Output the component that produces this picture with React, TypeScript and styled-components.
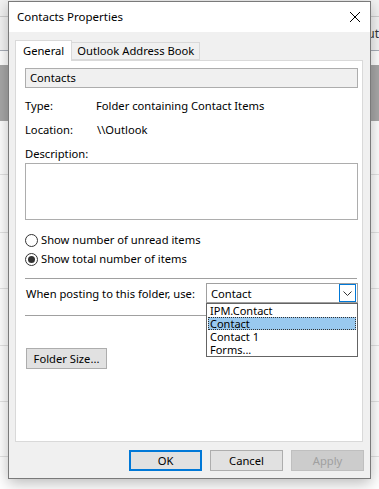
import styled, { createGlobalStyle } from 'styled-components';

const Global = createGlobalStyle`
    html, body {
        margin: 0;
        padding: 0;
        width: 379px;
        height: 489px;
        overflow: hidden;
        background: #ffffff;
    }
    * {
        box-sizing: border-box;
    }
`;

const Screen = styled.div`
    position: relative;
    width: 379px;
    height: 489px;
    overflow: hidden;
    font-family: "Noto Sans", "Open Sans", sans-serif;
    font-size: 11.2px;
    color: #000;
`;

const Backdrop = styled.div`
    display: flex;
    flex-direction: column;
    width: 100%;
    height: 100%;
    background: #ffffff;
`;

const BgRow = styled.div<{ $h: number; $bg?: string; $line?: string }>`
    height: ${(p) => p.$h}px;
    flex-shrink: 0;
    background: ${(p) => p.$bg || '#ffffff'};
    border-bottom: 1px solid ${(p) => p.$line || '#e3e3e3'};
    display: flex;
    align-items: center;
    justify-content: flex-end;
    color: #333;
    font-size: 12px;
    white-space: nowrap;
`;

const Dialog = styled.div`
    position: absolute;
    left: 8px;
    top: 1px;
    width: 363px;
    height: 478px;
    background: #f0f0f0;
    border: 1px solid #7a7a7a;
    box-shadow: 0 4px 14px rgba(0, 0, 0, 0.28);
    display: flex;
    flex-direction: column;
`;

const TitleBar = styled.div`
    height: 30px;
    background: #ffffff;
    display: flex;
    align-items: center;
    justify-content: space-between;
    padding: 0 9px 0 8px;
    flex-shrink: 0;
`;

const Title = styled.span`
    font-size: 11.5px;
    line-height: 16px;
`;

const Body = styled.div`
    flex: 1;
    display: flex;
    flex-direction: column;
    padding: 7px 7px 0 6px;
`;

const TabStrip = styled.div`
    display: flex;
    align-items: flex-end;
    height: 21px;
    position: relative;
    z-index: 1;
`;

const Tab = styled.div<{ $active?: boolean }>`
    height: ${(p) => (p.$active ? 21 : 18)}px;
    padding: 0 ${(p) => (p.$active ? 7 : 5)}px;
    display: flex;
    align-items: center;
    background: ${(p) => (p.$active ? '#ffffff' : '#f0f0f0')};
    border: 1px solid #d9d9d9;
    border-bottom: ${(p) => (p.$active ? 'none' : '1px solid #d9d9d9')};
    margin-left: ${(p) => (p.$active ? 0 : -1)}px;
    margin-bottom: ${(p) => (p.$active ? -1 : 0)}px;
    line-height: 16px;
    white-space: nowrap;
`;

const Panel = styled.div`
    height: 382px;
    background: #ffffff;
    border: 1px solid #d9d9d9;
    padding: 7px 4px 0 9px;
    display: flex;
    flex-direction: column;
`;

const NameField = styled.div`
    height: 20px;
    background: #f0f0f0;
    border: 1px solid #adadad;
    padding: 0 4px;
    display: flex;
    align-items: center;
    line-height: 16px;
`;

const InfoRow = styled.div<{ $mt: number }>`
    display: flex;
    height: 16px;
    line-height: 16px;
    margin-top: ${(p) => p.$mt}px;
    white-space: nowrap;
`;

const InfoLabel = styled.span<{ $w: number }>`
    width: ${(p) => p.$w}px;
    flex-shrink: 0;
`;

const TextBox = styled.div`
    height: 57px;
    margin-top: 1px;
    border: 1px solid #adadad;
    background: #ffffff;
`;

const RadioRow = styled.label<{ $mt: number }>`
    display: flex;
    align-items: center;
    gap: 3px;
    height: 16px;
    line-height: 16px;
    margin-top: ${(p) => p.$mt}px;
    white-space: nowrap;
`;

const RadioDot = styled.span<{ $on?: boolean }>`
    width: 13px;
    height: 13px;
    border-radius: 50%;
    border: 1px solid #333333;
    background: #ffffff;
    display: flex;
    align-items: center;
    justify-content: center;
    flex-shrink: 0;
    &::after {
        content: '';
        display: ${(p) => (p.$on ? 'block' : 'none')};
        width: 7px;
        height: 7px;
        border-radius: 50%;
        background: #333333;
    }
`;

const Separator = styled.div<{ $mt: number; $w?: number }>`
    height: 1px;
    background: #a0a0a0;
    margin-top: ${(p) => p.$mt}px;
    width: ${(p) => (p.$w ? `${p.$w}px` : 'auto')};
    margin-right: ${(p) => (p.$w ? 0 : 1)}px;
`;

const PostRow = styled.div`
    display: flex;
    align-items: center;
    justify-content: space-between;
    margin-top: 4px;
    height: 20px;
    padding-left: 1px;
    position: relative;
    z-index: 2;
    white-space: nowrap;
`;

const ComboWrap = styled.div`
    position: relative;
    width: 152px;
    flex-shrink: 0;
`;

const Combo = styled.div`
    height: 20px;
    border: 1px solid #a0a0a0;
    background: #ffffff;
    display: flex;
    align-items: center;
    justify-content: space-between;
    padding: 0 1px 0 4px;
`;

const ComboButton = styled.div`
    width: 17px;
    height: 18px;
    border: 1px solid #0078d7;
    background: #ffffff;
    display: flex;
    align-items: center;
    justify-content: center;
`;

const DropList = styled.div`
    position: absolute;
    left: 0;
    top: 20px;
    width: 152px;
    border: 1px solid #646464;
    background: #ffffff;
    padding: 0 1px;
`;

const DropItem = styled.div<{ $sel?: boolean }>`
    height: 13px;
    line-height: 13px;
    padding-left: 2px;
    background: ${(p) => (p.$sel ? '#99c9ef' : 'transparent')};
    outline: ${(p) => (p.$sel ? '1px dotted #333' : 'none')};
    outline-offset: -1px;
    font-size: 11px;
    overflow: hidden;
`;

const Button = styled.button<{ $primary?: boolean; $disabled?: boolean }>`
    width: 73px;
    height: 21px;
    font-family: inherit;
    font-size: 11.2px;
    line-height: 16px;
    padding: 0;
    background: ${(p) => (p.$disabled ? '#cccccc' : '#e1e1e1')};
    color: ${(p) => (p.$disabled ? '#a0a0a0' : '#000000')};
    border: ${(p) => (p.$primary ? '2px solid #0078d7' : `1px solid ${p.$disabled ? '#bfbfbf' : '#adadad'}`)};
`;

const FolderSizeButton = styled(Button)`
    width: 81px;
    margin-top: 32px;
    margin-left: 1px;
`;

const Footer = styled.div`
    display: flex;
    justify-content: flex-end;
    gap: 8px;
    margin-top: 8px;
    margin-right: -1px;
`;

function CloseIcon() {
    return (
        <svg width="12" height="12" viewBox="0 0 12 12">
            <path d="M1 1 L11 11 M11 1 L1 11" stroke="#000" strokeWidth="1" fill="none" />
        </svg>
    );
}

function Chevron() {
    return (
        <svg width="9" height="5" viewBox="0 0 9 5">
            <path d="M0.5 0.5 L4.5 4.5 L8.5 0.5" stroke="#333" strokeWidth="1" fill="none" />
        </svg>
    );
}

export default function App() {
    const options = ['IPM.Contact', 'Contact', 'Contact 1', 'Forms...'];
    return (
        <Screen>
            <Global />
            <Backdrop>
                <BgRow $h={17} $bg="#f3f3f3" $line="#cfcfcf" />
                <BgRow $h={34} $bg="#f5f5f5" $line="#a9aeb8">ut</BgRow>
                <BgRow $h={14} $bg="#ffffff" $line="#ffffff" />
                <BgRow $h={56} $bg="#a8a8a8" $line="#a8a8a8" />
                <BgRow $h={54} />
                <BgRow $h={58} />
                <BgRow $h={56} />
                <BgRow $h={57} />
                <BgRow $h={56} />
                <BgRow $h={55} />
            </Backdrop>
            <Dialog>
                <TitleBar>
                    <Title>Contacts Properties</Title>
                    <CloseIcon />
                </TitleBar>
                <Body>
                    <TabStrip>
                        <Tab $active>General</Tab>
                        <Tab>Outlook Address Book</Tab>
                    </TabStrip>
                    <Panel>
                        <NameField>Contacts</NameField>
                        <InfoRow $mt={10}>
                            <InfoLabel $w={71}>Type:</InfoLabel>
                            <span>Folder containing Contact Items</span>
                        </InfoRow>
                        <InfoRow $mt={8}>
                            <InfoLabel $w={72}>Location:</InfoLabel>
                            <span>\\Outlook</span>
                        </InfoRow>
                        <InfoRow $mt={8}>
                            <span>Description:</span>
                        </InfoRow>
                        <TextBox />
                        <RadioRow $mt={12}>
                            <RadioDot />
                            Show number of unread items
                        </RadioRow>
                        <RadioRow $mt={3}>
                            <RadioDot $on />
                            Show total number of items
                        </RadioRow>
                        <Separator $mt={11} />
                        <PostRow>
                            <span>When posting to this folder, use:</span>
                            <ComboWrap>
                                <Combo>
                                    <span>Contact</span>
                                    <ComboButton>
                                        <Chevron />
                                    </ComboButton>
                                </Combo>
                                <DropList>
                                    {options.map((o) => (
                                        <DropItem key={o} $sel={o === 'Contact'}>{o}</DropItem>
                                    ))}
                                </DropList>
                            </ComboWrap>
                        </PostRow>
                        <Separator $mt={12} $w={181} />
                        <FolderSizeButton>Folder Size...</FolderSizeButton>
                    </Panel>
                    <Footer>
                        <Button $primary>OK</Button>
                        <Button>Cancel</Button>
                        <Button $disabled>Apply</Button>
                    </Footer>
                </Body>
            </Dialog>
        </Screen>
    );
}
